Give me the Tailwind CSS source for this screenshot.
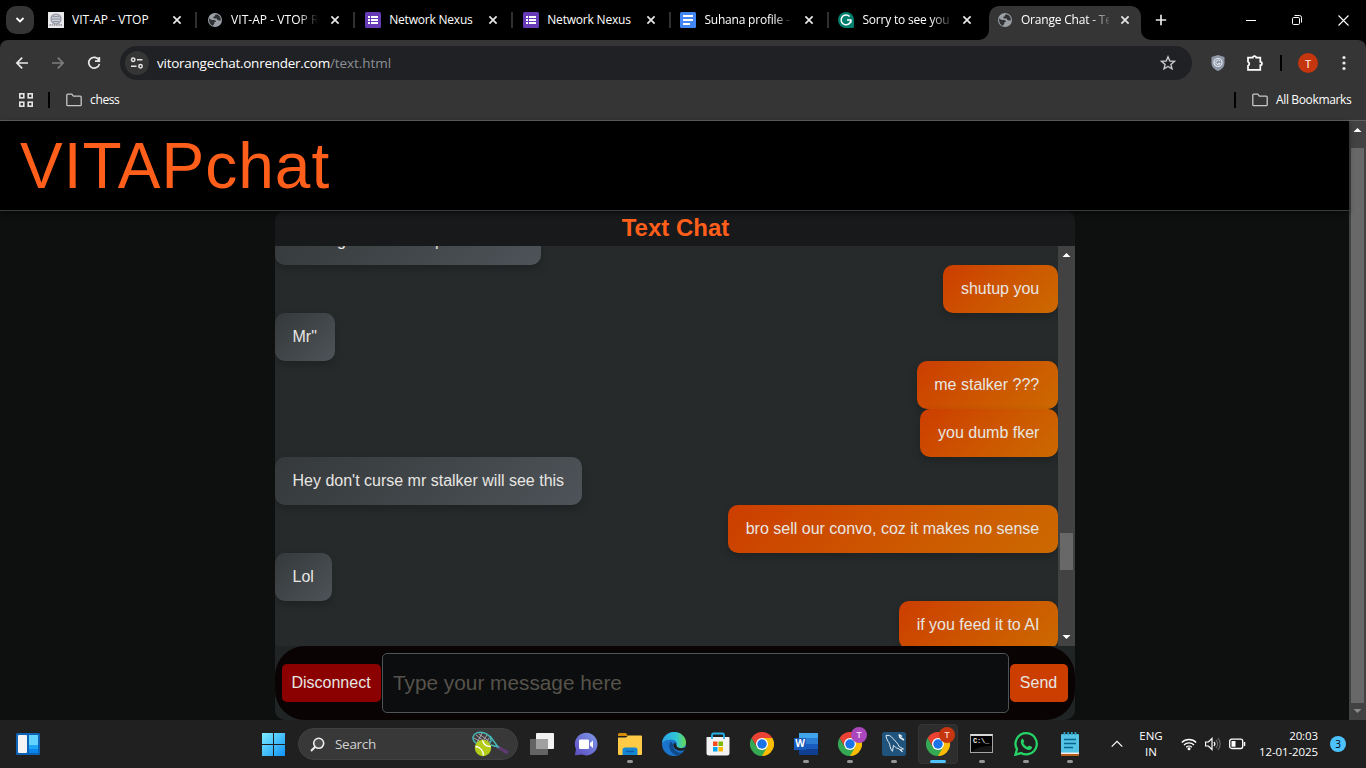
<!DOCTYPE html>
<html lang="en">
<head>
<meta charset="utf-8">
<title>Orange Chat - Text</title>
<script src="https://cdn.jsdelivr.net/npm/@tailwindcss/browser@4"></script>
</head>
<body class="w-[1366px] h-[768px] overflow-hidden bg-black flex flex-col font-['Open_Sans',sans-serif] text-white">

<svg class="hidden">
  <symbol id="close" viewBox="0 0 16 16"><path d="M4.400 4.400l7.200 7.200M11.600 4.400l-7.200 7.200" stroke="#e8e8e8" stroke-width="1.700" fill="none"/></symbol>
  <symbol id="globe" viewBox="0 0 16 16"><circle cx="8" cy="8" r="7" fill="#9aa0a6"/><path d="M2.200 6.200c1.600 1.600 2.600 1.900 4.600 1.900 1.500 0 2.100.8 2.100 1.800H7.400v1.500l-1.500 2.400C3.300 13 1.700 10 2.200 6.200zM8.300 2.600c-.3 1.300-.2 1.900-1.700 2.200-.6.200-.4 1.700.8 1.700h2.500c.2 1.700.9 2.200 3.900 1.900.2-2.700-.9-4.500-2.500-5.500-1-.4-2-.5-3-.3z" fill="#303134"/></symbol>
  <symbol id="form" viewBox="0 0 16 16"><rect width="16" height="16" rx="1.500" fill="#673ab7"/><path d="M3 4h2v2H3zM3 7h2v2H3zM3 10h2v2H3zM6 4h7v2H6zM6 7h7v2H6zM6 10h7v2H6z" fill="#fff"/></symbol>
  <symbol id="folder" viewBox="0 0 16 14"><path d="M.8 2.200a1 1 0 0 1 1-1h4l1.600 1.900h6.800a1 1 0 0 1 1 1v7.600a1 1 0 0 1-1 1H1.800a1 1 0 0 1-1-1z" fill="none" stroke="#c7c7c7" stroke-width="1.300"/></symbol>
  <symbol id="chrome" viewBox="0 0 48 48"><path d="M24 24L44.800 12A24 24 0 0 1 24 48z" fill="#fbbc04"/><path d="M24 12H44.800L34.400 30z" fill="#fbbc04"/><path d="M3.200 12A24 24 0 0 1 44.800 12H24L13.600 30z" fill="#ea4335"/><path d="M13.600 30L3.200 12A24 24 0 0 0 24 48L34.400 30z" fill="#34a853"/><circle cx="24" cy="24" r="12" fill="#fff"/><circle cx="24" cy="24" r="9.500" fill="#1a73e8"/></symbol>
</svg>

<!-- Tab strip -->
<div class="h-10 shrink-0 flex bg-black text-[12px] leading-4 tracking-[-0.2px]">
  <div class="w-10 pl-1.5 pt-1.5"><div class="size-7 rounded-[10px] bg-[#353535] flex items-center justify-center"><svg width="10" height="8" viewBox="0 0 10 8"><path d="M1.500 2l3.500 3.500L8.500 2" fill="none" stroke="#fff" stroke-width="1.800"/></svg></div></div>
  <div class="w-[158.1px] flex items-center pl-2">
    <svg width="16" height="16" viewBox="0 0 16 16"><rect width="16" height="16" fill="#e9e9ec"/><circle cx="8" cy="7" r="5" fill="#c9cad3" stroke="#9195a0" stroke-width="1.200"/><path d="M5 4.500h6M4 7h8M5 9.500h6" stroke="#8f939e" stroke-width=".9"/><path d="M1.500 13h13" stroke="#8b8f9a" stroke-width="1.600" stroke-dasharray="1.500 .7"/></svg>
    <div class="ml-2 w-[88px] overflow-hidden whitespace-nowrap tracking-[0.04px]">VIT-AP - VTOP</div><svg class="ml-[9px] size-4"><use href="#close"/></svg><div class="ml-[10px] w-0.5 h-4 bg-[#303030]"></div>
  </div>
  <div class="w-[158.1px] flex items-center pl-[9px]">
    <svg class="size-4"><use href="#globe"/></svg>
    <div class="ml-2 w-[87px] overflow-hidden whitespace-nowrap tracking-[0.04px] [mask-image:linear-gradient(90deg,#000_78%,transparent)]">VIT-AP - VTOP R</div><svg class="ml-[9px] size-4"><use href="#close"/></svg><div class="ml-[10px] w-0.5 h-4 bg-[#303030]"></div>
  </div>
  <div class="w-[158.1px] flex items-center pl-[9px]">
    <svg class="size-4"><use href="#form"/></svg>
    <div class="ml-2 w-[87px] overflow-hidden whitespace-nowrap">Network Nexus</div><svg class="ml-[9px] size-4"><use href="#close"/></svg><div class="ml-[10px] w-0.5 h-4 bg-[#303030]"></div>
  </div>
  <div class="w-[158.1px] flex items-center pl-[9px]">
    <svg class="size-4"><use href="#form"/></svg>
    <div class="ml-2 w-[87px] overflow-hidden whitespace-nowrap">Network Nexus</div><svg class="ml-[9px] size-4"><use href="#close"/></svg><div class="ml-[10px] w-0.5 h-4 bg-[#303030]"></div>
  </div>
  <div class="w-[158.1px] flex items-center pl-2">
    <svg width="16" height="16" viewBox="0 0 16 16"><rect width="16" height="16" rx="1.500" fill="#4285f4"/><path d="M3 3h10v2H3zM3 7h10v2H3zM3 11h7v2H3z" fill="#fff"/></svg>
    <div class="ml-2 w-[88px] overflow-hidden whitespace-nowrap [mask-image:linear-gradient(90deg,#000_80%,transparent)]">Suhana profile -</div><svg class="ml-[9px] size-4"><use href="#close"/></svg><div class="ml-[10px] w-0.5 h-4 bg-[#303030]"></div>
  </div>
  <div class="w-[158.5px] flex items-center pl-2">
    <svg width="16" height="16" viewBox="0 0 16 16"><path d="M8 0a8 8 0 0 1 8 8v6.500a1.500 1.500 0 0 1-1.500 1.500H8A8 8 0 0 1 8 0z" fill="#027e6f"/><path d="M11.600 4.600A4.900 4.900 0 1 0 12.900 8H9M12.900 8v2.800" fill="none" stroke="#fff" stroke-width="1.500"/></svg>
    <div class="ml-2 w-[88px] overflow-hidden whitespace-nowrap [mask-image:linear-gradient(90deg,#000_78%,transparent_105%)]">Sorry to see you</div><svg class="ml-[9px] size-4"><use href="#close"/></svg>
  </div>
  <div class="relative w-[152px] h-[34px] mt-1.5 pb-1.5 flex items-center pl-2 bg-[#353535] rounded-t-[10px]">
    <svg class="absolute -left-[10px] bottom-0" width="10" height="10"><path d="M10 0v10H0A10 10 0 0 0 10 0z" fill="#353535"/></svg>
    <svg class="absolute -right-[10px] bottom-0" width="10" height="10"><path d="M0 0v10h10A10 10 0 0 1 0 0z" fill="#353535"/></svg>
    <svg class="size-4"><use href="#globe"/></svg>
    <div class="ml-2 w-[88px] overflow-hidden whitespace-nowrap [mask-image:linear-gradient(90deg,#000_78%,transparent_105%)]">Orange Chat - Te</div><svg class="ml-2 size-4"><use href="#close"/></svg>
  </div>
  <div class="flex-1 flex items-center">
    <svg class="ml-[14px]" width="12" height="12"><path d="M6 .8v10.400M.8 6h10.400" stroke="#e8e8e8" stroke-width="1.700"/></svg>
    <svg class="ml-[79px]" width="10" height="12"><path d="M0 6.500h10" stroke="#fff"/></svg>
    <svg class="ml-9" width="10" height="10" viewBox="0 0 10 10"><rect x=".5" y="2.500" width="7" height="7" rx="1.200" fill="none" stroke="#fff"/><path d="M2.500.5h5a2 2 0 0 1 2 2v5" fill="none" stroke="#fff"/></svg>
    <svg class="ml-9" width="11" height="11"><path d="M.5.5l10 10M10.500.5l-10 10" stroke="#fff" stroke-width="1.100"/></svg>
  </div>
</div>

<!-- Toolbar and bookmarks -->
<div class="h-[81px] shrink-0 bg-[#353535] rounded-t-lg border-b border-[#606060]">
  <div class="h-[46px] flex items-center pl-[14px]">
    <svg width="16" height="16" viewBox="0 0 16 16"><path d="M14 8H3M8.200 2.700L2.900 8l5.300 5.300" fill="none" stroke="#e8e8e8" stroke-width="1.700"/></svg>
    <svg class="ml-5" width="16" height="16" viewBox="0 0 16 16"><path d="M2 8h11M7.800 2.700L13.100 8l-5.300 5.300" fill="none" stroke="#7d7d7d" stroke-width="1.700"/></svg>
    <svg class="ml-5" width="16" height="16" viewBox="0 0 16 16"><path d="M12.900 5.200A5.400 5.400 0 1 0 13.400 8.800M13.300 2v4.200H9" fill="none" stroke="#e8e8e8" stroke-width="1.700"/></svg>
    <div class="ml-[18px] w-[1072px] h-[34px] rounded-full bg-[#202124] flex items-center pl-[5px] pr-4">
      <div class="size-6 rounded-full bg-[#353535] flex items-center justify-center"><svg width="14" height="14" viewBox="0 0 14 14"><g fill="none" stroke="#e4e4e4" stroke-width="1.500"><circle cx="3.200" cy="3.800" r="1.700"/><path d="M7 3.800h5.500M1 10.200h5.500"/><circle cx="10.500" cy="10.200" r="1.700"/></g></svg></div>
      <div class="ml-2 flex-1 text-[13.500px] leading-5 tracking-[-0.26px] text-white">vitorangechat.onrender.com<span class="tracking-[-0.06px] text-[#8c9095]">/text.html</span></div>
      <svg width="16" height="16" viewBox="0 0 16 16"><path d="M8 1.800l1.800 4.200 4.600.4-3.500 3 1.100 4.500L8 11.500l-4 2.400 1.100-4.500-3.500-3L6.200 6z" fill="none" stroke="#c7c7c7" stroke-width="1.400"/></svg>
    </div>
    <svg class="ml-[19px]" width="14" height="16" viewBox="0 0 14 16"><path d="M7 0l6.500 2v6c0 4-3 6.500-6.500 8C3.500 14.500.5 12 .5 8V2z" fill="#8f98a8"/><circle cx="7" cy="7.500" r="4" fill="none" stroke="#e2e7ef" stroke-width="1.200"/><path d="M9 6a2.300 2.300 0 1 0 .2 2.500H7" fill="none" stroke="#e2e7ef"/></svg>
    <svg class="ml-[21px]" width="18" height="18" viewBox="0 0 18 18"><path d="M2 3.700h4.800a1.700 1.700 0 0 1 3.400 0h4.100v4.100a1.700 1.700 0 0 1 0 3.400v4.600H2v-4.100a2.200 2.200 0 0 0 0-4z" fill="none" stroke="#fff" stroke-width="1.700"/><path d="M7 3a1.600 1.600 0 0 1 3 0zM15 8a1.600 1.600 0 0 1 0 3z" fill="#fff"/></svg>
    <div class="ml-[16px] w-0.5 h-4 bg-black"></div>
    <div class="ml-4 size-5 rounded-full bg-[#c5360f] flex items-center justify-center text-[11px] leading-none font-semibold text-[#fbd5c8]">T</div>
    <svg class="ml-6" width="4" height="16"><g fill="#e8e8e8"><circle cx="2" cy="2.500" r="1.600"/><circle cx="2" cy="8" r="1.600"/><circle cx="2" cy="13.500" r="1.600"/></g></svg>
  </div>
  <div class="h-7 flex items-center pl-[19px] pr-[15px] text-[12px] leading-4 tracking-[-0.36px]">
    <svg width="14" height="14"><g fill="none" stroke="#e4e4e4" stroke-width="1.600"><rect x=".8" y=".8" width="4" height="4"/><rect x="9.200" y=".8" width="4" height="4"/><rect x=".8" y="9.200" width="4" height="4"/><rect x="9.200" y="9.200" width="4" height="4"/></g></svg>
    <div class="ml-[15px] w-0.5 h-4 bg-black"></div>
    <svg class="ml-4" width="16" height="14"><use href="#folder"/></svg>
    <div class="ml-2 flex-1">chess</div>
    <div class="w-0.5 h-4 bg-black"></div>
    <svg class="ml-4" width="16" height="14"><use href="#folder"/></svg>
    <div class="ml-2 w-[75px] whitespace-nowrap">All Bookmarks</div>
  </div>
</div>

<!-- Page -->
<div class="h-[599px] shrink-0 flex bg-[#0e100f] font-['Liberation_Sans',Arial,sans-serif]">
  <div class="w-[1349px] flex flex-col">
    <div class="h-[90px] shrink-0 bg-black border-b border-[#363b3d] pl-5 pt-[9px] text-[64px] leading-[72px] text-[#ff5f1a] shadow-[0_2px_5px_rgba(0,0,0,.5)] z-10"><span class="tracking-[1px]">VITAPchat</span></div>
    <div class="w-[800px] h-[509px] ml-[275px] bg-[#202425] rounded-[10px] flex flex-col overflow-hidden">
      <div class="h-[35px] shrink-0 bg-[#17191a] text-center pl-px text-[24px] leading-[34px] font-bold text-[#ff5f1a]">Text Chat</div>
      <div class="h-[400px] shrink-0 flex bg-[#262a2b] rounded-b-[4px]">
        <div class="flex-1 h-full overflow-hidden flex flex-col justify-end text-[16px] leading-[18px] text-[#e8e6e3]">
          <div class="-mb-[3px] flex flex-col">
            <div class="h-12 w-[266px] rounded-[10px] bg-linear-135 from-[#35393b] to-[#4d5358] shadow-[0_4px_8px_rgba(0,0,0,.2)] pl-[62px] pt-[15px] flex"><span class="w-[98px]">g</span><span>p</span></div>
            <div class="self-end h-12 rounded-[10px] bg-linear-135 from-[#cc3d00] to-[#cc6900] shadow-[0_4px_8px_rgba(0,0,0,.2)] pl-[18px] pr-[18.800px] pt-[15px]">shutup you</div>
            <div class="self-start h-12 rounded-[10px] bg-linear-135 from-[#35393b] to-[#4d5358] shadow-[0_4px_8px_rgba(0,0,0,.2)] pl-[17.500px] pr-[18.300px] pt-[15px]">Mr"</div>
            <div class="self-end h-12 rounded-[10px] bg-linear-135 from-[#cc3d00] to-[#cc6900] shadow-[0_4px_8px_rgba(0,0,0,.2)] pl-[17.500px] pr-[18.800px] pt-[15px]">me stalker ???</div>
            <div class="self-end h-12 rounded-[10px] bg-linear-135 from-[#cc3d00] to-[#cc6900] shadow-[0_4px_8px_rgba(0,0,0,.2)] pl-[18px] pr-[18.600px] pt-[15px]">you dumb fker</div>
            <div class="self-start h-12 rounded-[10px] bg-linear-135 from-[#35393b] to-[#4d5358] shadow-[0_4px_8px_rgba(0,0,0,.2)] px-[17.500px] pt-[15px]">Hey don't curse mr stalker will see this</div>
            <div class="self-end h-12 rounded-[10px] bg-linear-135 from-[#cc3d00] to-[#cc6900] shadow-[0_4px_8px_rgba(0,0,0,.2)] pl-[18px] pr-[18.800px] pt-[15px]">bro sell our convo, coz it makes no sense</div>
            <div class="self-start h-12 rounded-[10px] bg-linear-135 from-[#35393b] to-[#4d5358] shadow-[0_4px_8px_rgba(0,0,0,.2)] pl-[17.500px] pr-[18.300px] pt-[15px]">Lol</div>
            <div class="self-end h-12 rounded-[10px] bg-linear-135 from-[#cc3d00] to-[#cc6900] shadow-[0_4px_8px_rgba(0,0,0,.2)] pl-[17.500px] pr-[18.600px] pt-[15px]">if you feed it to AI</div>
          </div>
        </div>
        <div class="w-[17px] h-full bg-[#424242] flex flex-col items-center">
          <svg class="mt-[7px]" width="9" height="4"><path d="M.5 4L4.500 0l4 4z" fill="#fff"/></svg>
          <div class="mt-[276px] w-[13px] h-[37px] bg-[#686868]"></div>
          <svg class="mt-[65px]" width="9" height="4"><path d="M.5 0h8l-4 4z" fill="#fff"/></svg>
        </div>
      </div>
      <div class="h-[74px] shrink-0 rounded-[30px] bg-[#0a0303] flex items-center px-[7px] text-[16px] text-[#e8e6e3]">
        <div class="w-[99px] h-[38px] rounded-[5px] bg-[#8b0000] text-center pr-px leading-[37px]">Disconnect</div>
        <div class="ml-[1px] w-[627px] h-[60px] rounded-[5px] border border-[#4e5558] bg-[#0b0d0e] pl-[10px] text-[20.800px] leading-[58px] text-[#57534b]">Type your message here</div>
        <div class="ml-[1px] w-[58px] h-[38px] rounded-[5px] bg-[#cc3d00] text-center pr-px leading-[37px]">Send</div>
      </div>
    </div>
  </div>
  <div class="w-[17px] bg-[#424242] flex flex-col items-center">
    <svg class="mt-[7px]" width="9" height="4"><path d="M.5 4L4.500 0l4 4z" fill="#fff"/></svg>
    <div class="mt-4 w-[13px] h-[555px] bg-[#686868]"></div>
    <svg class="mt-[6px]" width="9" height="4"><path d="M.5 0h8l-4 4z" fill="#8b8b8b"/></svg>
  </div>
</div>

<!-- Taskbar -->
<div class="h-12 shrink-0 bg-[#202020] flex items-center pl-4">
  <svg width="24" height="22" viewBox="0 0 24 22"><rect width="24" height="22" rx="1.500" fill="#0f63b5"/><rect x="2" y="2" width="9" height="18" rx="1" fill="#f4f4f4"/><rect x="13" y="2" width="9" height="10" fill="#62d4ff"/><rect x="13" y="12" width="9" height="4" fill="#1fa5f5"/><rect x="13" y="16" width="9" height="4" fill="#0a85ec"/></svg>
  <svg class="ml-[222px]" width="23" height="23" viewBox="0 0 23 23"><defs><linearGradient id="win" x1="0" y1="0" x2="1" y2="1" gradientUnits="objectBoundingBox"><stop stop-color="#7eeeff"/><stop offset="1" stop-color="#0f92f5"/></linearGradient></defs><path d="M0 0h11v11H0zM12 0h11v11H12zM0 12h11v11H0zM12 12h11v11H12z" fill="url(#win)"/></svg>
  <div class="ml-[13px] w-[220px] h-8 rounded-full bg-[#383838] border border-[#404040] flex items-center pl-[11px]">
    <svg width="15" height="15" viewBox="0 0 15 15"><circle cx="8.700" cy="6.300" r="5" fill="#4e4e4e" stroke="#eee" stroke-width="1.600"/><path d="M5.200 9.800L1 14" stroke="#eee" stroke-width="2"/></svg>
    <div class="ml-[10px] flex-1 text-[13.500px] leading-5 tracking-[-0.3px] text-[#d2d2d2]">Search</div>
    <svg class="mr-[7px]" width="38" height="26" viewBox="0 0 38 26"><path d="M25 15.500l11 6.500" stroke="#5b3a70" stroke-width="3.500"/><ellipse cx="10" cy="8" rx="9.200" ry="6.500" transform="rotate(15 10 8)" fill="#413f42" stroke="#46b8b5" stroke-width="1.500"/><path d="M4 4l12 9M2 7l10 6M7 3l11 8M5 12l5-10M9 13l6-9M13 14l4-7" stroke="#c4bcc0" stroke-width=".8"/><path d="M18 5l8 11-7-2" fill="none" stroke="#46b8b5" stroke-width="1.500"/><circle cx="11" cy="17" r="8.200" fill="#b4cc19"/><path d="M3.500 15.500c4 0 8 4 8 9M10.500 9.500c1 3.500 4 6 8.300 6" fill="none" stroke="#fff" stroke-width="1.300"/></svg>
  </div>
  <div class="ml-[2px] flex [&>div]:w-11 [&>div]:h-12 [&>div]:relative [&>div]:flex [&>div]:items-center [&>div]:justify-center">
    <div><svg width="24" height="22" viewBox="0 0 24 22"><rect x="6" width="18" height="16" rx="1" fill="#f2f2f2"/><rect y="6" width="18" height="16" rx="1" fill="#6b6b6b" fill-opacity=".9"/><path d="M6 6h12v10H6z" fill="#a0a0a0"/></svg></div>
    <div><svg width="24" height="24" viewBox="0 0 24 24"><defs><linearGradient id="meet" x1="1" y1="0" x2="0" y2="1"><stop stop-color="#7f9be8"/><stop offset="1" stop-color="#5b4cc0"/></linearGradient></defs><path d="M12 .8a11.300 11.300 0 1 1-4 21.800L.8 23.200l1.200-6A11.300 11.300 0 0 1 12 .8z" fill="url(#meet)"/><rect x="5" y="7.500" width="10" height="9.500" rx="1.200" fill="#fff"/><path d="M16 11l3-2.500v7.500L16 13.500z" fill="#fff"/></svg></div>
    <div><svg width="24" height="22" viewBox="0 0 24 22"><path d="M0 1.500A1.500 1.500 0 0 1 1.500 0H8l2 3H0z" fill="#d38c05"/><path d="M0 4.500h8l2.200-2H23a1 1 0 0 1 1 1V21a1 1 0 0 1-1 1H1a1 1 0 0 1-1-1z" fill="#ffcb47"/><path d="M4.500 22v-5a2.500 2.500 0 0 1 2.500-2.500h10a2.500 2.500 0 0 1 2.500 2.500v5z" fill="#1487d4"/><path d="M8 18.500h8" stroke="#0a5da5" stroke-width="1.500"/></svg><i class="absolute bottom-[5px] h-[3px] w-1.5 rounded bg-[#969696]"></i></div>
    <div><svg width="24" height="24" viewBox="0 0 24 24"><defs><linearGradient id="edge"><stop stop-color="#2aa4e8"/><stop offset=".6" stop-color="#31c6d5"/><stop offset="1" stop-color="#69db4d"/></linearGradient></defs><circle cx="12" cy="12" r="12" fill="#1b74cc"/><path d="M0 11C1 4 6 0 12 0c7 0 12 5 12 10.500 0 3.500-2.500 5.500-5.500 5.500-3 0-4.500-1.300-4-2.500 1-1 .9-4.500-3-5.500C7 7 2 8 0 11z" fill="url(#edge)"/><path d="M9 9.500c-4 3.500-1 11.500 4.500 13.500 2 .5 5-.3 7.500-2.500-6 1-10.500-3-9.500-7.500z" fill="#114a8b"/><path d="M13 10.500c-2 1-2.500 4.500 1 7 3 2 6.500 1.500 9 0l.9-2.500c-3 2-9 1.500-9.400-1.500z" fill="#202020"/></svg></div>
    <div><svg width="24" height="24" viewBox="0 0 24 24"><path d="M6 6V3a1.500 1.500 0 0 1 1.500-1.500h9A1.500 1.500 0 0 1 18 3v3" fill="none" stroke="#28b2ec" stroke-width="1.800"/><path d="M.5 6.500A1 1 0 0 1 1.500 5h21a1 1 0 0 1 1 1.500V21a2.500 2.500 0 0 1-2.500 2.500H3A2.500 2.500 0 0 1 .5 21z" fill="#f3f3f3"/><path d="M7 9.500h4.500V14H7z" fill="#f25022"/><path d="M12.500 9.500H17V14h-4.500z" fill="#7fba00"/><path d="M7 15h4.500v4.500H7z" fill="#00a4ef"/><path d="M12.500 15H17v4.500h-4.500z" fill="#ffb900"/><path d="M6 5v2M18 5v2" stroke="#28b2ec" stroke-width="1.800"/></svg></div>
    <div><svg class="size-6"><use href="#chrome"/></svg></div>
    <div><div class="w-6 h-[22px] flex items-center bg-[linear-gradient(#41a5ee_0_25%,#2b7cd3_25%_50%,#185abd_50%_75%,#103f91_75%)] bg-no-repeat bg-right bg-size-[19px_22px]"><div class="size-3 bg-[#185abd] text-[10px] font-bold leading-[11px] text-center font-['Open_Sans']">W</div></div><i class="absolute bottom-[5px] h-[3px] w-1.5 rounded bg-[#969696]"></i></div>
    <div><svg class="size-6"><use href="#chrome"/></svg><b class="absolute left-[23px] top-[7px] size-4 rounded-full bg-[#ab47bc] text-center text-[9px] leading-4 font-semibold text-[#f0d8f5]">T</b><i class="absolute bottom-[5px] h-[3px] w-1.5 rounded bg-[#969696]"></i></div>
    <div><svg width="24" height="24" viewBox="0 0 24 24"><rect width="24" height="24" rx="2.500" fill="#20537c"/><path d="M4 3.500c3-.8 5 .5 7 3 3 3.500 5 5 6 8l4.500 2.500-3 .3 2 2.500c-2-.5-3-3-4.500-3.500-2.500 0-3-2-4.500-3l-1 6c-3-3-2-6-3.500-8.500-1-2-2.500-3-3-7.300z" fill="none" stroke="#dfebf3" stroke-width="1"/><path d="M17 2.500l1 3 4 2.500M17 2.500l3 2" stroke="#eef5fa" stroke-width="1.500" fill="none"/></svg><i class="absolute bottom-[5px] h-[3px] w-1.5 rounded bg-[#969696]"></i></div>
    <div><span class="absolute inset-x-[2px] top-1 h-10 rounded-[4px] bg-[#2d2d2d] border border-[#343434]"></span><svg class="relative size-6"><use href="#chrome"/></svg><b class="absolute left-[23px] top-[7px] size-4 rounded-full bg-[#c5360f] text-center text-[9px] leading-4 font-semibold text-[#fbd5c8]">T</b><i class="absolute bottom-[5px] h-[3px] w-4 rounded bg-[#4cc2ff]"></i></div>
    <div><div class="w-[23px] h-[19px] bg-black border border-[#a5a5a5] border-t-2 border-t-[#d8d8d8] mr-px mb-1 mt-[3px] overflow-hidden"><div class="pl-[2px] pt-[1px] font-['Liberation_Mono'] font-bold text-[7px] leading-2 tracking-[-0.2px] text-[#e8e8e8]">C:\_</div><svg width="21" height="8"><path d="M0 8V7Q8 0 21 1v7z" fill="#161616"/></svg></div><i class="absolute bottom-[5px] h-[3px] w-1.5 rounded bg-[#969696]"></i></div>
    <div><svg width="24" height="24" viewBox="0 0 24 24"><path d="M12.300 1.200a10.600 10.600 0 1 1-5.200 19.900L1.400 22.700 3 17.200A10.600 10.600 0 0 1 12.300 1.200z" fill="none" stroke="#25d366" stroke-width="2.300"/><path d="M8.800 6.500l1.500 3-1 1.500c1 2 2.300 3.200 4.300 4l1.500-1.500 3 1.500c0 2-1.500 3-3.300 3-4-.5-7.800-4.500-8-8 0-1.800.8-3 2-3.500z" fill="#25d366"/></svg><i class="absolute bottom-[5px] h-[3px] w-1.5 rounded bg-[#969696]"></i></div>
    <div><svg width="18" height="24" viewBox="0 0 18 24"><rect y="2" width="18" height="20" rx="1" fill="#54c3e4"/><path d="M0 21h18v3H0z" fill="#b5601d"/><path d="M0 20.500h18v1.500H0z" fill="#eee"/><path d="M3.500 0v3M7.200 0v3M10.800 0v3M14.500 0v3" stroke="#2f9fc4" stroke-width="1.800"/><path d="M3 7.500h12M3 11.500h12M3 15.500h9" stroke="#0a668f" stroke-width="1.400"/></svg><i class="absolute bottom-[5px] h-[3px] w-1.5 rounded bg-[#969696]"></i></div>
  </div>
  <svg class="ml-[19px]" width="12" height="8"><path d="M.7 6.700L6 1.400l5.300 5.300" fill="none" stroke="#fff" stroke-width="1.200"/></svg>
  <div class="ml-[14px] w-7 text-center text-[11.500px] leading-4 whitespace-nowrap">ENG<br>IN</div>
  <svg class="ml-4" width="16" height="14" viewBox="0 0 16 14"><g fill="none" stroke="#fff" stroke-width="1.300"><path d="M.8 5.500a10.200 10.200 0 0 1 14.400 0M3 8a7 7 0 0 1 10 0M5.200 10.300a4 4 0 0 1 5.600 0"/></g><circle cx="8" cy="11.800" r="1.500" fill="#fff"/></svg>
  <svg class="ml-2" width="16" height="14" viewBox="0 0 16 14"><path d="M.6 5h2.800L7 1.500v11L3.400 9H.6z" fill="none" stroke="#fff" stroke-width="1.200"/><path d="M9 5a3 3 0 0 1 0 4" fill="none" stroke="#fff" stroke-width="1.200"/><path d="M11 3a6 6 0 0 1 0 8M13 1.200a9 9 0 0 1 0 11.600" fill="none" stroke="#666" stroke-width="1.200"/></svg>
  <svg class="ml-2" width="17" height="12" viewBox="0 0 17 12"><rect x=".7" y="1.200" width="13" height="9.300" rx="2" fill="none" stroke="#fff" stroke-width="1.300"/><rect x="2.500" y="3" width="4" height="5.700" rx=".5" fill="#fff"/><path d="M15.500 4v4" stroke="#fff" stroke-width="1.500"/></svg>
  <div class="ml-[11px] w-[61px] flex flex-col items-end text-[11.500px] leading-4 tracking-[-0.1px] whitespace-nowrap"><span>20:03</span><span>12-01-2025</span></div>
  <div class="ml-3 size-4 rounded-full bg-[#4cc2ff] text-center text-[10px] leading-4 text-black">3</div>
</div>
</body>
</html>
